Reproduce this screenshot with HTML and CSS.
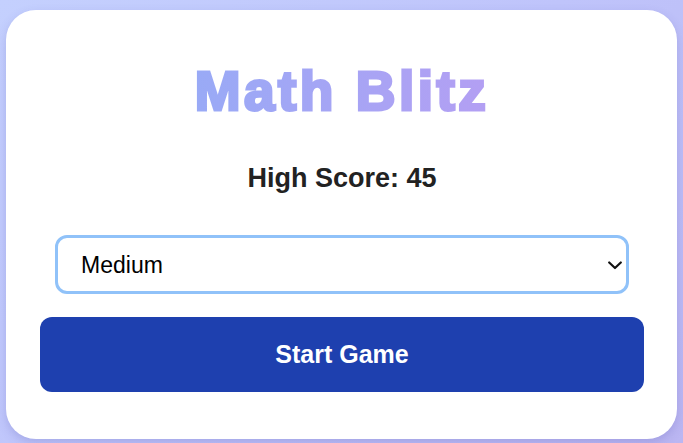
FILE: index.html
```html
<!DOCTYPE html>
<html>
<head>
<meta charset="utf-8">
<link rel="stylesheet" href="styles.css">
</head>
<body>
<main class="card">
  <h1 class="title">Math Blitz</h1>
  <p class="high-score">High Score: <span>45</span></p>
  <div class="select-wrap">
    <select class="difficulty">
      <option>Easy</option>
      <option selected>Medium</option>
      <option>Hard</option>
    </select>
    <svg class="chevron" width="14" height="9" viewBox="0 0 14 9" aria-hidden="true"><path d="M1.2 1.5 L7 7 L12.8 1.5" fill="none" stroke="#111" stroke-width="2.2" stroke-linecap="round" stroke-linejoin="round"/></svg>
  </div>
  <button class="start">Start Game</button>
</main>
</body>
</html>
```
FILE: styles.css
```css
html, body {
  margin: 0;
  padding: 0;
  height: 100%;
}
body {
  font-family: "Liberation Sans", Arial, sans-serif;
  background: linear-gradient(135deg, #c4d0fe 0%, #bfc4fb 50%, #bbb6f2 100%);
  padding: 10px 6px 5px 6px;
  box-sizing: border-box;
  overflow: hidden;
}
.card {
  background: #fff;
  border-radius: 30px;
  padding: 0 33px 47px 34px;
  box-shadow: 0 4px 10px rgba(90, 90, 180, 0.25);
  display: flex;
  flex-direction: column;
  align-items: center;
}
.title {
  margin: 50px 0 0;
  font-size: 55px;
  line-height: 62px;
  font-weight: 700;
  letter-spacing: 3.5px;
  background: linear-gradient(90deg, #99aaf6, #b39ff3);
  -webkit-background-clip: text;
  background-clip: text;
  color: transparent;
  -webkit-text-stroke: 3px transparent;
}
.high-score {
  margin: 41px 0 0;
  font-size: 27px;
  font-weight: 700;
  color: #222;
  line-height: 30px;
}
.select-wrap {
  position: relative;
  margin-top: 42px;
  width: 95%;
  display: flex;
}
.difficulty {
  -webkit-appearance: none;
  appearance: none;
  width: 100%;
  height: 59px;
  border: 3px solid #90c2f9;
  border-radius: 12px;
  padding: 0 40px 0 23px;
  font-family: "Liberation Sans", Arial, sans-serif;
  font-size: 23px;
  color: #000;
  background: #fff;
  outline: none;
}
.chevron {
  position: absolute;
  right: 7px;
  top: 26px;
  pointer-events: none;
}
.start {
  margin-top: 23px;
  width: 100%;
  height: 75px;
  border: none;
  border-radius: 12px;
  background: #1e40af;
  color: #fff;
  font-family: "Liberation Sans", Arial, sans-serif;
  font-size: 25px;
  font-weight: 700;
  cursor: pointer;
}
```
